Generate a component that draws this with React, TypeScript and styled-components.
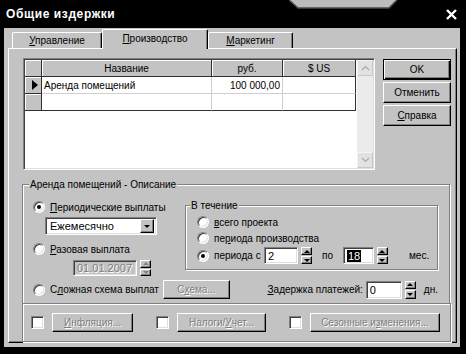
import React from 'react';
import styled, { createGlobalStyle, css } from 'styled-components';

const FACE = '#c3c3c3';
const SHADOW = '#808080';
const DARK = '#404040';
const LIGHT = '#dfdfdf';

const GlobalStyle = createGlobalStyle`
  html, body { margin: 0; padding: 0; background: #000; }
  body {
    font-family: "Liberation Sans", Arial, sans-serif;
    font-size: 10px;
    color: #000;
  }
  * { box-sizing: border-box; }
`;

const raised = css`
  border: 1px solid;
  border-color: #fff #000 #000 #fff;
  box-shadow: inset -1px -1px ${SHADOW};
`;

const sunken = css`
  border: 1px solid;
  border-color: ${SHADOW} #fff #fff ${SHADOW};
  box-shadow: inset 1px 1px ${DARK}, inset -1px -1px ${LIGHT};
`;

const etched = css`
  border: 1px solid ${SHADOW};
  box-shadow: inset 1px 1px #fff, 1px 1px #fff;
`;

const disabledText = css`
  color: ${SHADOW};
  text-shadow: 1px 1px #fff;
`;

const Window = styled.div`
  position: relative;
  width: 466px;
  height: 354px;
  background: #000;
  display: flex;
  flex-direction: column;
  overflow: hidden;
`;

const Notch = styled.svg`
  position: absolute;
  top: 0;
  left: 289px;
`;

const TitleBar = styled.div`
  height: 28px;
  display: flex;
  align-items: center;
  justify-content: space-between;
  padding: 0 9px 0 6px;
`;

const Title = styled.div`
  color: #fff;
  font-family: "Liberation Sans", Arial, sans-serif;
  font-weight: bold;
  font-size: 12px;
  letter-spacing: 0.6px;
`;

const Body = styled.div`
  flex: 1;
  margin: 0 6px 7px 4px;
  background: ${FACE};
  padding: 1px 3px 0 4px;
  display: flex;
  flex-direction: column;
`;

const TabRow = styled.div`
  height: 19px;
  display: flex;
  align-items: flex-end;
  padding-left: 4px;
  position: relative;
  z-index: 1;
`;

const Tab = styled.div<{ $active?: boolean; $w: number }>`
  width: ${p => p.$w}px;
  height: ${p => (p.$active ? 20 : 16)}px;
  margin-bottom: ${p => (p.$active ? -1 : 0)}px;
  background: ${FACE};
  border-top: 1px solid #fff;
  border-left: 1px solid #fff;
  border-right: 1px solid #000;
  box-shadow: inset -1px 0 ${SHADOW};
  border-radius: 2px 2px 0 0;
  display: flex;
  align-items: center;
  justify-content: center;
  padding-bottom: ${p => (p.$active ? 3 : 0)}px;
`;

const Panel = styled.div`
  width: 449px;
  height: 295px;
  ${raised};
  padding: 9px 0 0 14px;
  display: flex;
  flex-direction: column;
`;

const TopRow = styled.div`
  display: flex;
  gap: 8px;
  height: 112px;
`;

const DataGrid = styled.div`
  width: 352px;
  height: 112px;
  ${sunken};
  background: #fff;
  padding: 1px;
  display: flex;
`;

const GridTable = styled.div`
  flex: 1;
  display: grid;
  grid-template-columns: 17px 170px 71px 73px;
  grid-auto-rows: 17px;
  align-content: start;
`;

type CellKind = 'head' | 'fixed' | 'data';

const Cell = styled.div<{ $kind: CellKind; $align?: 'left' | 'right' | 'center'; $lastCol?: boolean; $lastRow?: boolean }>`
  display: flex;
  align-items: center;
  justify-content: ${p => (p.$align === 'right' ? 'flex-end' : p.$align === 'center' ? 'center' : 'flex-start')};
  padding: 0 2px;
  white-space: nowrap;
  overflow: hidden;
  ${p =>
    p.$kind === 'data'
      ? css`
          background: #fff;
          border-right: 1px solid ${p.$lastCol ? '#303030' : '#cfcfcf'};
          border-bottom: 1px solid ${p.$lastRow ? '#303030' : '#cfcfcf'};
        `
      : css`
          background: ${FACE};
          border-right: 1px solid #303030;
          border-bottom: 1px solid #303030;
          box-shadow: inset 1px 1px #fff;
        `}
`;

const RowMarker = styled.span`
  width: 0;
  height: 0;
  margin-left: 5px;
  border-left: 6px solid #000;
  border-top: 5px solid transparent;
  border-bottom: 5px solid transparent;
`;

const ScrollBar = styled.div`
  width: 16px;
  display: flex;
  flex-direction: column;
  background: #ebebeb;
`;

const ScrollButton = styled.div`
  height: 16px;
  background: #e2e2e2;
  border: 1px solid;
  border-color: #f4f4f4 #c8c8c8 #c8c8c8 #f4f4f4;
  display: flex;
  align-items: center;
  justify-content: center;
`;

const ScrollTrack = styled.div`
  flex: 1;
`;

const ButtonColumn = styled.div`
  width: 68px;
  margin-top: 1px;
  display: flex;
  flex-direction: column;
  gap: 2px;
`;

const WinButton = styled.div<{ $default?: boolean; $disabled?: boolean; $w?: number; $h?: number }>`
  width: ${p => (p.$w ? `${p.$w}px` : '100%')};
  height: ${p => p.$h ?? 21}px;
  background: ${FACE};
  display: flex;
  align-items: center;
  justify-content: center;
  white-space: nowrap;
  flex-shrink: 0;
  ${p =>
    p.$default
      ? css`
          border: 1px solid #000;
          box-shadow: inset 1px 1px #fff, inset -1px -1px #000, inset -2px -2px ${SHADOW};
        `
      : raised}
  ${p => p.$disabled && disabledText}
`;

const GroupBox = styled.fieldset<{ $w: number; $h: number }>`
  width: ${p => p.$w}px;
  height: ${p => p.$h}px;
  min-width: 0;
  margin: 0;
  ${etched};
`;

const MainGroup = styled(GroupBox)`
  margin: 8px 0 0 -1px;
  padding: 0 11px 0 10px;
`;

const InnerGroup = styled(GroupBox)`
  margin-top: 8px;
  padding: 0 0 0 11px;
`;

const Legend = styled.legend<{ $shift: number }>`
  padding: 0 1px;
  margin-left: ${p => p.$shift}px;
  line-height: 13px;
  background: ${FACE};
`;

const MainRow = styled.div`
  display: flex;
`;

const LeftCol = styled.div`
  width: 152px;
  display: flex;
  flex-direction: column;
`;

const Option = styled.label<{ $top?: number; $w?: number }>`
  display: flex;
  align-items: center;
  gap: 3px;
  height: 14px;
  margin-top: ${p => p.$top ?? 0}px;
  width: ${p => (p.$w ? `${p.$w}px` : 'auto')};
  flex-shrink: 0;
  white-space: nowrap;
`;

const Radio = styled.span<{ $checked?: boolean }>`
  width: 12px;
  height: 12px;
  border-radius: 50%;
  background: #fff;
  border: 1px solid;
  border-color: ${SHADOW} #fff #fff ${SHADOW};
  box-shadow: inset 1px 1px ${DARK}, inset -1px -1px ${LIGHT};
  display: flex;
  align-items: center;
  justify-content: center;
  margin-right: 2px;
  flex-shrink: 0;
  &::after {
    content: '';
    width: 4px;
    height: 4px;
    border-radius: 50%;
    background: ${p => (p.$checked ? '#000' : 'transparent')};
  }
`;

const U = styled.span`
  text-decoration: underline;
  text-underline-offset: 1px;
`;

const Combo = styled.div`
  width: 112px;
  height: 18px;
  margin: 3px 0 0 12px;
  ${sunken};
  background: #fff;
  display: flex;
  align-items: center;
  justify-content: space-between;
  padding: 0 2px 0 4px;
  font-size: 11px;
`;

const ComboArrow = styled.span`
  width: 14px;
  height: 14px;
  background: ${FACE};
  ${raised};
  display: flex;
  align-items: center;
  justify-content: center;
  &::after {
    content: '';
    border-left: 3px solid transparent;
    border-right: 3px solid transparent;
    border-top: 3px solid #000;
  }
`;

const SpinField = styled.div<{ $left?: number; $top?: number; $h?: number }>`
  display: flex;
  gap: 3px;
  height: ${p => p.$h ?? 17}px;
  margin-left: ${p => p.$left ?? 0}px;
  margin-top: ${p => p.$top ?? 0}px;
`;

const Field = styled.div<{ $w: number; $disabled?: boolean }>`
  width: ${p => p.$w}px;
  height: 100%;
  ${sunken};
  background: ${p => (p.$disabled ? FACE : '#fff')};
  display: flex;
  align-items: center;
  padding-left: 3px;
  font-size: 11px;
  ${p => p.$disabled && disabledText}
`;

const Selected = styled.span`
  background: #000;
  color: #fff;
  padding: 0 1px;
  line-height: 12px;
`;

const Spinner = styled.div`
  width: 11px;
  display: flex;
  flex-direction: column;
  gap: 1px;
`;

const SpinHalf = styled.div<{ $dir: 'up' | 'down'; $disabled?: boolean }>`
  flex: 1;
  background: ${FACE};
  ${raised};
  display: flex;
  align-items: center;
  justify-content: center;
  &::after {
    content: '';
    border-left: 3px solid transparent;
    border-right: 3px solid transparent;
    ${p => (p.$dir === 'up' ? 'border-bottom' : 'border-top')}: 3px solid ${p => (p.$disabled ? SHADOW : '#000')};
  }
`;

const InnerRows = styled.div`
  display: flex;
  flex-direction: column;
  gap: 2px;
  margin-top: 3px;
`;

const Row = styled.div`
  display: flex;
  align-items: center;
`;

const Text = styled.span<{ $left?: number; $disabled?: boolean }>`
  margin-left: ${p => p.$left ?? 0}px;
  white-space: nowrap;
  ${p => p.$disabled && disabledText}
`;

const RowB = styled.div`
  display: flex;
  align-items: center;
  height: 19px;
  margin-top: 4px;
`;

const Delay = styled.div`
  margin-left: auto;
  display: flex;
  align-items: center;
`;

const BottomBox = styled.div`
  width: 429px;
  height: 39px;
  margin: -1px 0 0 -1px;
  ${etched};
  display: flex;
  align-items: center;
  justify-content: space-between;
  padding: 0 10px 0 8px;
`;

const CheckGroup = styled.div`
  display: flex;
  align-items: center;
  gap: 8px;
`;

const CheckBox = styled.span`
  width: 13px;
  height: 13px;
  background: #fff;
  ${sunken};
`;

const Chevron = ({ up }: { up?: boolean }) => (
  <svg width="9" height="6" viewBox="0 0 9 6">
    <path d={up ? 'M1 5 L4.5 1.5 L8 5' : 'M1 1 L4.5 4.5 L8 1'} fill="none" stroke="#a9a9a9" strokeWidth="1.2" />
  </svg>
);

const columns = [
  { title: 'Название', align: 'left' as const },
  { title: 'руб.', align: 'right' as const },
  { title: '$ US', align: 'right' as const },
];

const rows = [
  ['Аренда помещений', '100 000,00', ''],
  ['', '', ''],
];

export default function App() {
  return (
    <>
      <GlobalStyle />
      <Window>
        <Notch width="112" height="10" viewBox="0 0 112 10">
          <polygon points="0,0 9,8 100,8 108,0" fill="#bdbdbd" />
          <polyline points="0,0 9,8 100,8 108,0" fill="none" stroke="#4a4a4a" strokeWidth="1.5" />
        </Notch>
        <TitleBar>
          <Title>Общие издержки</Title>
          <svg width="11" height="11" viewBox="0 0 11 11">
            <path d="M1 1 L10 10 M10 1 L1 10" stroke="#fff" strokeWidth="2.4" />
          </svg>
        </TitleBar>
        <Body>
          <TabRow>
            <Tab $w={90}><span><U>У</U>правление</span></Tab>
            <Tab $w={106} $active><span><U>П</U>роизводство</span></Tab>
            <Tab $w={85}><span><U>М</U>аркетинг</span></Tab>
          </TabRow>
          <Panel>
            <TopRow>
              <DataGrid>
                <GridTable>
                  <Cell $kind="head" />
                  {columns.map(c => (
                    <Cell key={c.title} $kind="head" $align="center">{c.title}</Cell>
                  ))}
                  {rows.map((r, i) => (
                    <React.Fragment key={i}>
                      <Cell $kind="fixed">{i === 0 && <RowMarker />}</Cell>
                      {r.map((v, j) => (
                        <Cell
                          key={j}
                          $kind="data"
                          $align={columns[j].align}
                          $lastCol={j === r.length - 1}
                          $lastRow={i === rows.length - 1}
                        >
                          {v}
                        </Cell>
                      ))}
                    </React.Fragment>
                  ))}
                </GridTable>
                <ScrollBar>
                  <ScrollButton><Chevron up /></ScrollButton>
                  <ScrollTrack />
                  <ScrollButton><Chevron /></ScrollButton>
                </ScrollBar>
              </DataGrid>
              <ButtonColumn>
                <WinButton $default>OK</WinButton>
                <WinButton>Отменить</WinButton>
                <WinButton><span><U>С</U>правка</span></WinButton>
              </ButtonColumn>
            </TopRow>

            <MainGroup $w={428} $h={126}>
              <Legend $shift={-4}>Аренда помещений - Описание</Legend>
              <MainRow>
                <LeftCol>
                  <Option $top={9}>
                    <Radio $checked />
                    <span><U>П</U>ериодические выплаты</span>
                  </Option>
                  <Combo>
                    <span>Ежемесячно</span>
                    <ComboArrow />
                  </Combo>
                  <Option $top={7}>
                    <Radio />
                    <span><U>Р</U>азовая выплата</span>
                  </Option>
                  <SpinField $left={40} $top={4} $h={16}>
                    <Field $w={64} $disabled>01.01.2007</Field>
                    <Spinner>
                      <SpinHalf $dir="up" $disabled />
                      <SpinHalf $dir="down" $disabled />
                    </Spinner>
                  </SpinField>
                </LeftCol>
                <InnerGroup $w={253} $h={71}>
                  <Legend $shift={-7}>В течение</Legend>
                  <InnerRows>
                    <Option>
                      <Radio />
                      <span><U>в</U>сего проекта</span>
                    </Option>
                    <Option>
                      <Radio />
                      <span>пе<U>р</U>иода производства</span>
                    </Option>
                    <Row>
                      <Option $w={67}>
                        <Radio $checked />
                        <span>перио<U>д</U>а с</span>
                      </Option>
                      <SpinField>
                        <Field $w={34}>2</Field>
                        <Spinner>
                          <SpinHalf $dir="up" />
                          <SpinHalf $dir="down" />
                        </Spinner>
                      </SpinField>
                      <Text $left={10}>по</Text>
                      <SpinField $left={10}>
                        <Field $w={31}><Selected>18</Selected></Field>
                        <Spinner>
                          <SpinHalf $dir="up" />
                          <SpinHalf $dir="down" />
                        </Spinner>
                      </SpinField>
                      <Text $left={21}>мес.</Text>
                    </Row>
                  </InnerRows>
                </InnerGroup>
              </MainRow>
              <RowB>
                <Option $w={130}>
                  <Radio />
                  <span>С<U>л</U>ожная схема выплат</span>
                </Option>
                <WinButton $w={67} $h={19} $disabled>
                  <span>С<U>х</U>ема...</span>
                </WinButton>
                <Delay>
                  <Text><U>З</U>адержка платежей:</Text>
                  <SpinField $left={3} $h={18}>
                    <Field $w={36}>0</Field>
                    <Spinner>
                      <SpinHalf $dir="up" />
                      <SpinHalf $dir="down" />
                    </Spinner>
                  </SpinField>
                  <Text $left={8}>дн.</Text>
                </Delay>
              </RowB>
            </MainGroup>

            <BottomBox>
              <CheckGroup>
                <CheckBox />
                <WinButton $w={81} $h={19} $disabled><span><U>И</U>нфляция...</span></WinButton>
              </CheckGroup>
              <CheckGroup>
                <CheckBox />
                <WinButton $w={89} $h={19} $disabled><span>Налоги/<U>У</U>чет...</span></WinButton>
              </CheckGroup>
              <CheckGroup>
                <CheckBox />
                <WinButton $w={130} $h={19} $disabled><span>Сезонные и<U>з</U>менения...</span></WinButton>
              </CheckGroup>
            </BottomBox>
          </Panel>
        </Body>
      </Window>
    </>
  );
}
